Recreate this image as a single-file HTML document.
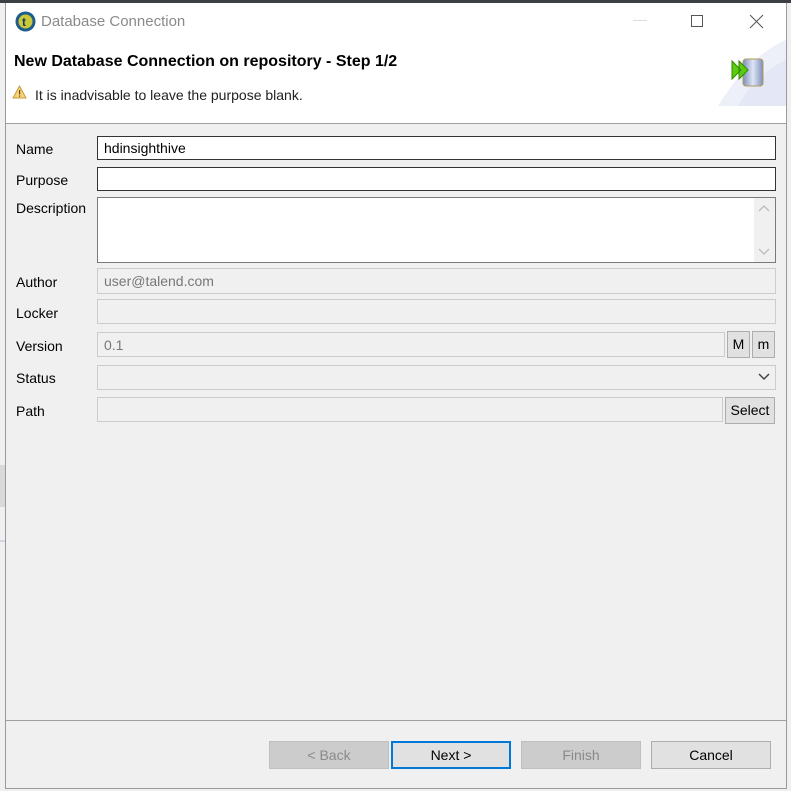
<!DOCTYPE html>
<html><head><style>
*{box-sizing:border-box;margin:0;padding:0}
body{width:791px;height:791px;position:relative;background:#f0f0f0;overflow:hidden;font-family:"Liberation Sans",sans-serif;font-size:14px;color:#000}
.a{position:absolute}
.dlg{left:5px;top:3px;width:782px;height:786px;background:#f0f0f0;border:1px solid #9a9a9a;border-top:none}
.lbl{position:absolute;left:16px;font-size:14px}
.fld{position:absolute;left:97px;height:25px;border:1px solid #ccc;background:#f0f0f0;padding:4px 6px;color:#777;font-size:14px}
.ed{border:1px solid #333;background:#fff;color:#000}
.btn{position:absolute;top:741px;width:120px;height:28px;border:1px solid #adadad;background:#e1e1e1;text-align:center;line-height:27px;font-size:14px}
.dis{background:#ccc;border-color:#bfbfbf;color:#8a8a8a}
.sb{position:absolute;border:1px solid #adadad;background:#e1e1e1;text-align:center;font-size:14px}
</style></head><body>
<div class="a" style="left:0;top:0;width:791px;height:3px;background:#3c3f44"></div>
<div class="a" style="left:0;top:465px;width:5px;height:42px;background:#d9d9d9"></div>
<div class="a" style="left:0;top:540px;width:5px;height:2px;background:#cdd6e3"></div>
<div class="a dlg"></div>
<div class="a" style="left:6px;top:3px;width:780px;height:120px;background:#fff"></div>
<svg class="a" style="left:713px;top:38px" width="73" height="68"><path d="M73 2 C45 14 22 40 5 68 L73 68Z" fill="#eef0f9"/><path d="M73 22 C52 30 35 50 25 68 L73 68Z" fill="#e4e8f6"/></svg>
<div class="a" style="left:6px;top:123px;width:780px;height:1px;background:#a0a0a0"></div>
<svg class="a" style="left:15px;top:11px" width="21" height="21"><circle cx="10.5" cy="10.5" r="10" fill="#1d5c8c"/><circle cx="10.5" cy="10.5" r="7" fill="#c8c83a"/><text x="7" y="15" font-size="12" font-weight="bold" fill="#1d3a55" font-family="Liberation Sans">t</text></svg>
<div class="a" style="left:41px;top:13px;font-size:15px;color:#8a8a8a">Database Connection</div>
<div class="a" style="left:633px;top:20px;width:14px;height:1px;background:#ddd"></div>
<div class="a" style="left:691px;top:15px;width:12px;height:12px;border:1px solid #555"></div>
<svg class="a" style="left:749px;top:14px" width="15" height="15"><path d="M1 1L14 14M14 1L1 14" stroke="#555" stroke-width="1"/></svg>
<div class="a" style="left:14px;top:53px;font-size:16px;font-weight:bold">New Database Connection on repository - Step 1/2</div>
<svg class="a" style="left:12px;top:85px" width="15" height="14"><path d="M7.5 1L14 13H1Z" fill="#f5d27a" stroke="#c89a3a"/><rect x="7" y="5" width="1.2" height="4.5" fill="#6a4a10"/><rect x="7" y="10.5" width="1.2" height="1.2" fill="#6a4a10"/></svg>
<div class="a" style="left:35px;top:87px;font-size:14px;color:#222">It is inadvisable to leave the purpose blank.</div>
<svg class="a" style="left:731px;top:56px" width="34" height="32"><defs><linearGradient id="g" x1="0" x2="1"><stop offset="0" stop-color="#7d8fb8"/><stop offset=".5" stop-color="#dfe5f5"/><stop offset="1" stop-color="#7d8fb8"/></linearGradient></defs><rect x="12" y="3" width="20" height="27" rx="3" fill="url(#g)" stroke="#b09a60"/><path d="M1 5L10 14L1 23Z M8 5L17 14L8 23Z" fill="#5ccc10" stroke="#2e8a00"/></svg>
<div class="lbl" style="top:141px">Name</div>
<div class="fld ed" style="top:136px;width:679px;height:24px;padding-top:3px">hdinsighthive</div>
<div class="lbl" style="top:172px">Purpose</div>
<div class="fld ed" style="top:167px;width:679px;height:24px"></div>
<div class="lbl" style="top:200px">Description</div>
<div class="fld ed" style="top:197px;width:679px;height:66px;border-color:#7a7a7a"></div>
<div class="a" style="left:754px;top:198px;width:21px;height:64px;background:#f0f0f0"></div>
<svg class="a" style="left:757px;top:204px" width="14" height="54"><path d="M2 7L7 2L12 7M2 45L7 50L12 45" stroke="#bbb" fill="none" stroke-width="1.3"/></svg>
<div class="lbl" style="top:274px">Author</div>
<div class="fld" style="top:268px;width:679px;height:26px">user@talend.com</div>
<div class="lbl" style="top:305px">Locker</div>
<div class="fld" style="top:299px;width:679px;height:25px"></div>
<div class="lbl" style="top:338px">Version</div>
<div class="fld" style="top:332px;width:628px;height:25px">0.1</div>
<div class="sb" style="left:727px;top:331px;width:23px;height:27px;line-height:25px">M</div>
<div class="sb" style="left:752px;top:331px;width:23px;height:27px;line-height:25px">m</div>
<div class="lbl" style="top:370px">Status</div>
<div class="fld" style="top:365px;width:679px;height:25px"></div>
<svg class="a" style="left:758px;top:373px" width="12" height="8"><path d="M1 1L6 6L11 1" stroke="#444" fill="none" stroke-width="1.5"/></svg>
<div class="lbl" style="top:403px">Path</div>
<div class="fld" style="top:397px;width:626px;height:25px"></div>
<div class="sb" style="left:725px;top:397px;width:50px;height:27px;line-height:25px">Select</div>
<div class="a" style="left:6px;top:720px;width:780px;height:1px;background:#a0a0a0"></div>
<div class="btn dis" style="left:269px">&lt; Back</div>
<div class="btn" style="left:391px;border:2px solid #0078d7;line-height:25px">Next &gt;</div>
<div class="btn dis" style="left:521px">Finish</div>
<div class="btn" style="left:651px">Cancel</div>
</body></html>
